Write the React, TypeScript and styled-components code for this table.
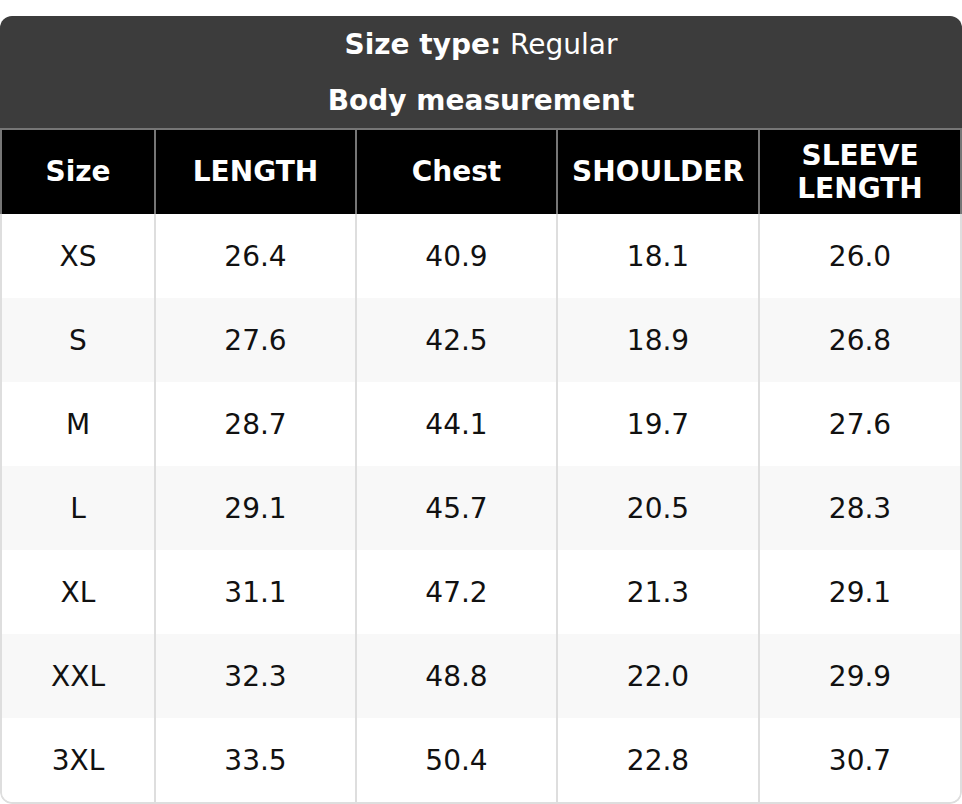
import React from "react";
import styled, { createGlobalStyle } from "styled-components";

const GlobalStyle = createGlobalStyle`
  html, body {
    margin: 0;
    padding: 0;
    background: #ffffff;
  }
  body {
    font-family: "DejaVu Sans", "Liberation Sans", sans-serif;
  }
  * { box-sizing: border-box; }
`;

const COLS = "154px 201px 201px 202px 1fr";

const Card = styled.div`
  width: 962px;
  margin-top: 16px;
  border-radius: 12px;
  overflow: hidden;
`;

const TitleBar = styled.div`
  background: #3c3c3c;
  color: #ffffff;
`;

const TitleLine = styled.div`
  height: 56px;
  display: flex;
  align-items: center;
  justify-content: center;
  font-size: 28px;
  font-weight: ${(p: { $bold?: boolean }) => (p.$bold ? 700 : 400)};
  white-space: pre;
`;

const Strong = styled.span`
  font-weight: 700;
`;

const HeadRow = styled.div`
  display: grid;
  grid-template-columns: ${COLS};
  background: #000000;
  border: 2px solid #767676;
  border-bottom: none;
`;

const HeadCell = styled.div<{ $last?: boolean }>`
  height: 84px;
  display: flex;
  align-items: center;
  justify-content: center;
  text-align: center;
  padding: 0 10px;
  color: #ffffff;
  font-size: 28px;
  font-weight: 700;
  line-height: 1.18;
  border-right: ${(p) => (p.$last ? "none" : "2px solid #767676")};
`;

const Body = styled.div`
  border: 2px solid #dedede;
  border-top: none;
  border-radius: 0 0 12px 12px;
  overflow: hidden;
`;

const Row = styled.div<{ $alt?: boolean }>`
  display: grid;
  grid-template-columns: ${COLS};
  background: ${(p) => (p.$alt ? "#f8f8f8" : "#ffffff")};
`;

const Cell = styled.div<{ $last?: boolean }>`
  height: 84px;
  display: flex;
  align-items: center;
  justify-content: center;
  color: #111111;
  font-size: 28px;
  border-right: ${(p) => (p.$last ? "none" : "2px solid #dedede")};
`;

const headers = ["Size", "LENGTH", "Chest", "SHOULDER", "SLEEVE LENGTH"];

const rows: string[][] = [
  ["XS", "26.4", "40.9", "18.1", "26.0"],
  ["S", "27.6", "42.5", "18.9", "26.8"],
  ["M", "28.7", "44.1", "19.7", "27.6"],
  ["L", "29.1", "45.7", "20.5", "28.3"],
  ["XL", "31.1", "47.2", "21.3", "29.1"],
  ["XXL", "32.3", "48.8", "22.0", "29.9"],
  ["3XL", "33.5", "50.4", "22.8", "30.7"],
];

export default function App() {
  return (
    <>
      <GlobalStyle />
      <Card>
        <TitleBar>
          <TitleLine>
            <Strong>Size type:</Strong> Regular
          </TitleLine>
          <TitleLine $bold>Body measurement</TitleLine>
        </TitleBar>
        <HeadRow>
          {headers.map((h, i) => (
            <HeadCell key={h} $last={i === headers.length - 1}>
              {h}
            </HeadCell>
          ))}
        </HeadRow>
        <Body>
          {rows.map((r, ri) => (
            <Row key={r[0]} $alt={ri % 2 === 1}>
              {r.map((v, ci) => (
                <Cell key={ci} $last={ci === r.length - 1}>
                  {v}
                </Cell>
              ))}
            </Row>
          ))}
        </Body>
      </Card>
    </>
  );
}
